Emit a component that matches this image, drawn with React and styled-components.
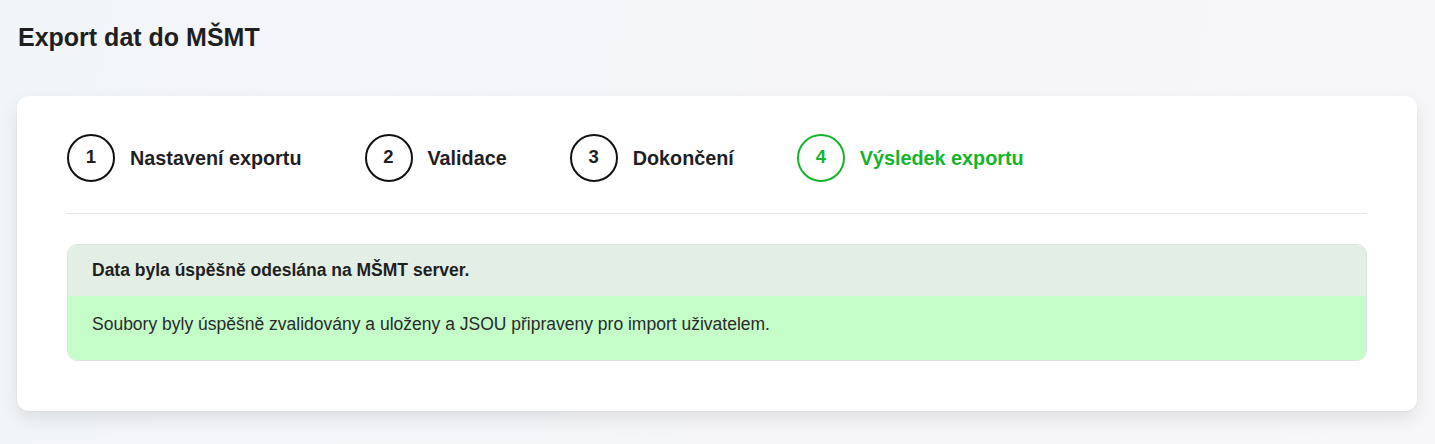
import styled, { createGlobalStyle } from "styled-components";

const GlobalStyle = createGlobalStyle`
  html, body {
    margin: 0;
    padding: 0;
  }
  body {
    font-family: "Liberation Sans", Arial, sans-serif;
    color: #1f1f1f;
    background: linear-gradient(100deg, #f2f5f8 0%, #f6f6f8 60%, #f7f6f8 100%);
    min-height: 444px;
  }
`;

const Page = styled.div`
  padding: 23px 18px 30px 17px;
`;

const Title = styled.h1`
  margin: 0 0 0 1px;
  font-size: 25px;
  font-weight: 700;
  line-height: 28px;
  color: #1f1f1f;
`;

const Card = styled.div`
  margin-top: 45px;
  background: #fff;
  border-radius: 12px;
  box-shadow: 0 8px 18px rgba(0, 0, 0, 0.09), 0 1px 3px rgba(0, 0, 0, 0.04);
  padding: 38px 50px 50px;
`;

const Steps = styled.div`
  display: flex;
  align-items: center;
  gap: 63px;
  padding-bottom: 31px;
  border-bottom: 1px solid #e4e4e4;
`;

const Step = styled.div`
  display: flex;
  align-items: center;
  gap: 15px;
  color: ${(p) => (p.$active ? "#15b52b" : "#1f1f1f")};
`;

const Circle = styled.div`
  box-sizing: content-box;
  width: 44px;
  height: 41px;
  padding-bottom: 3px;
  border-radius: 50%;
  border: 2px solid ${(p) => (p.$active ? "#15b52b" : "#111")};
  display: flex;
  align-items: center;
  justify-content: center;
  font-size: 18.5px;
  font-weight: 700;
`;

const Label = styled.span`
  font-size: 19.8px;
  font-weight: 700;
`;

const Alert = styled.div`
  margin-top: 30px;
  border: 1px solid #dde2de;
  border-radius: 10px;
  overflow: hidden;
`;

const AlertHead = styled.div`
  background: #e3eee4;
  height: 51px;
  display: flex;
  align-items: center;
  padding: 0 24px;
  font-size: 17.5px;
  font-weight: 700;
  color: #1f1f1f;
`;

const AlertBody = styled.div`
  background: #c4fdc8;
  height: 64px;
  display: flex;
  align-items: center;
  padding: 0 24px 8px;
  box-sizing: border-box;
  font-size: 17.5px;
  color: #2a2a2a;
`;

const steps = [
  { n: 1, label: "Nastavení exportu" },
  { n: 2, label: "Validace" },
  { n: 3, label: "Dokončení" },
  { n: 4, label: "Výsledek exportu", active: true },
];

export default function App() {
  return (
    <>
      <GlobalStyle />
      <Page>
        <Title>Export dat do MŠMT</Title>
        <Card>
          <Steps>
            {steps.map((s) => (
              <Step key={s.n} $active={s.active}>
                <Circle $active={s.active}>{s.n}</Circle>
                <Label>{s.label}</Label>
              </Step>
            ))}
          </Steps>
          <Alert>
            <AlertHead>Data byla úspěšně odeslána na MŠMT server.</AlertHead>
            <AlertBody>
              Soubory byly úspěšně zvalidovány a uloženy a JSOU připraveny pro import uživatelem.
            </AlertBody>
          </Alert>
        </Card>
      </Page>
    </>
  );
}
